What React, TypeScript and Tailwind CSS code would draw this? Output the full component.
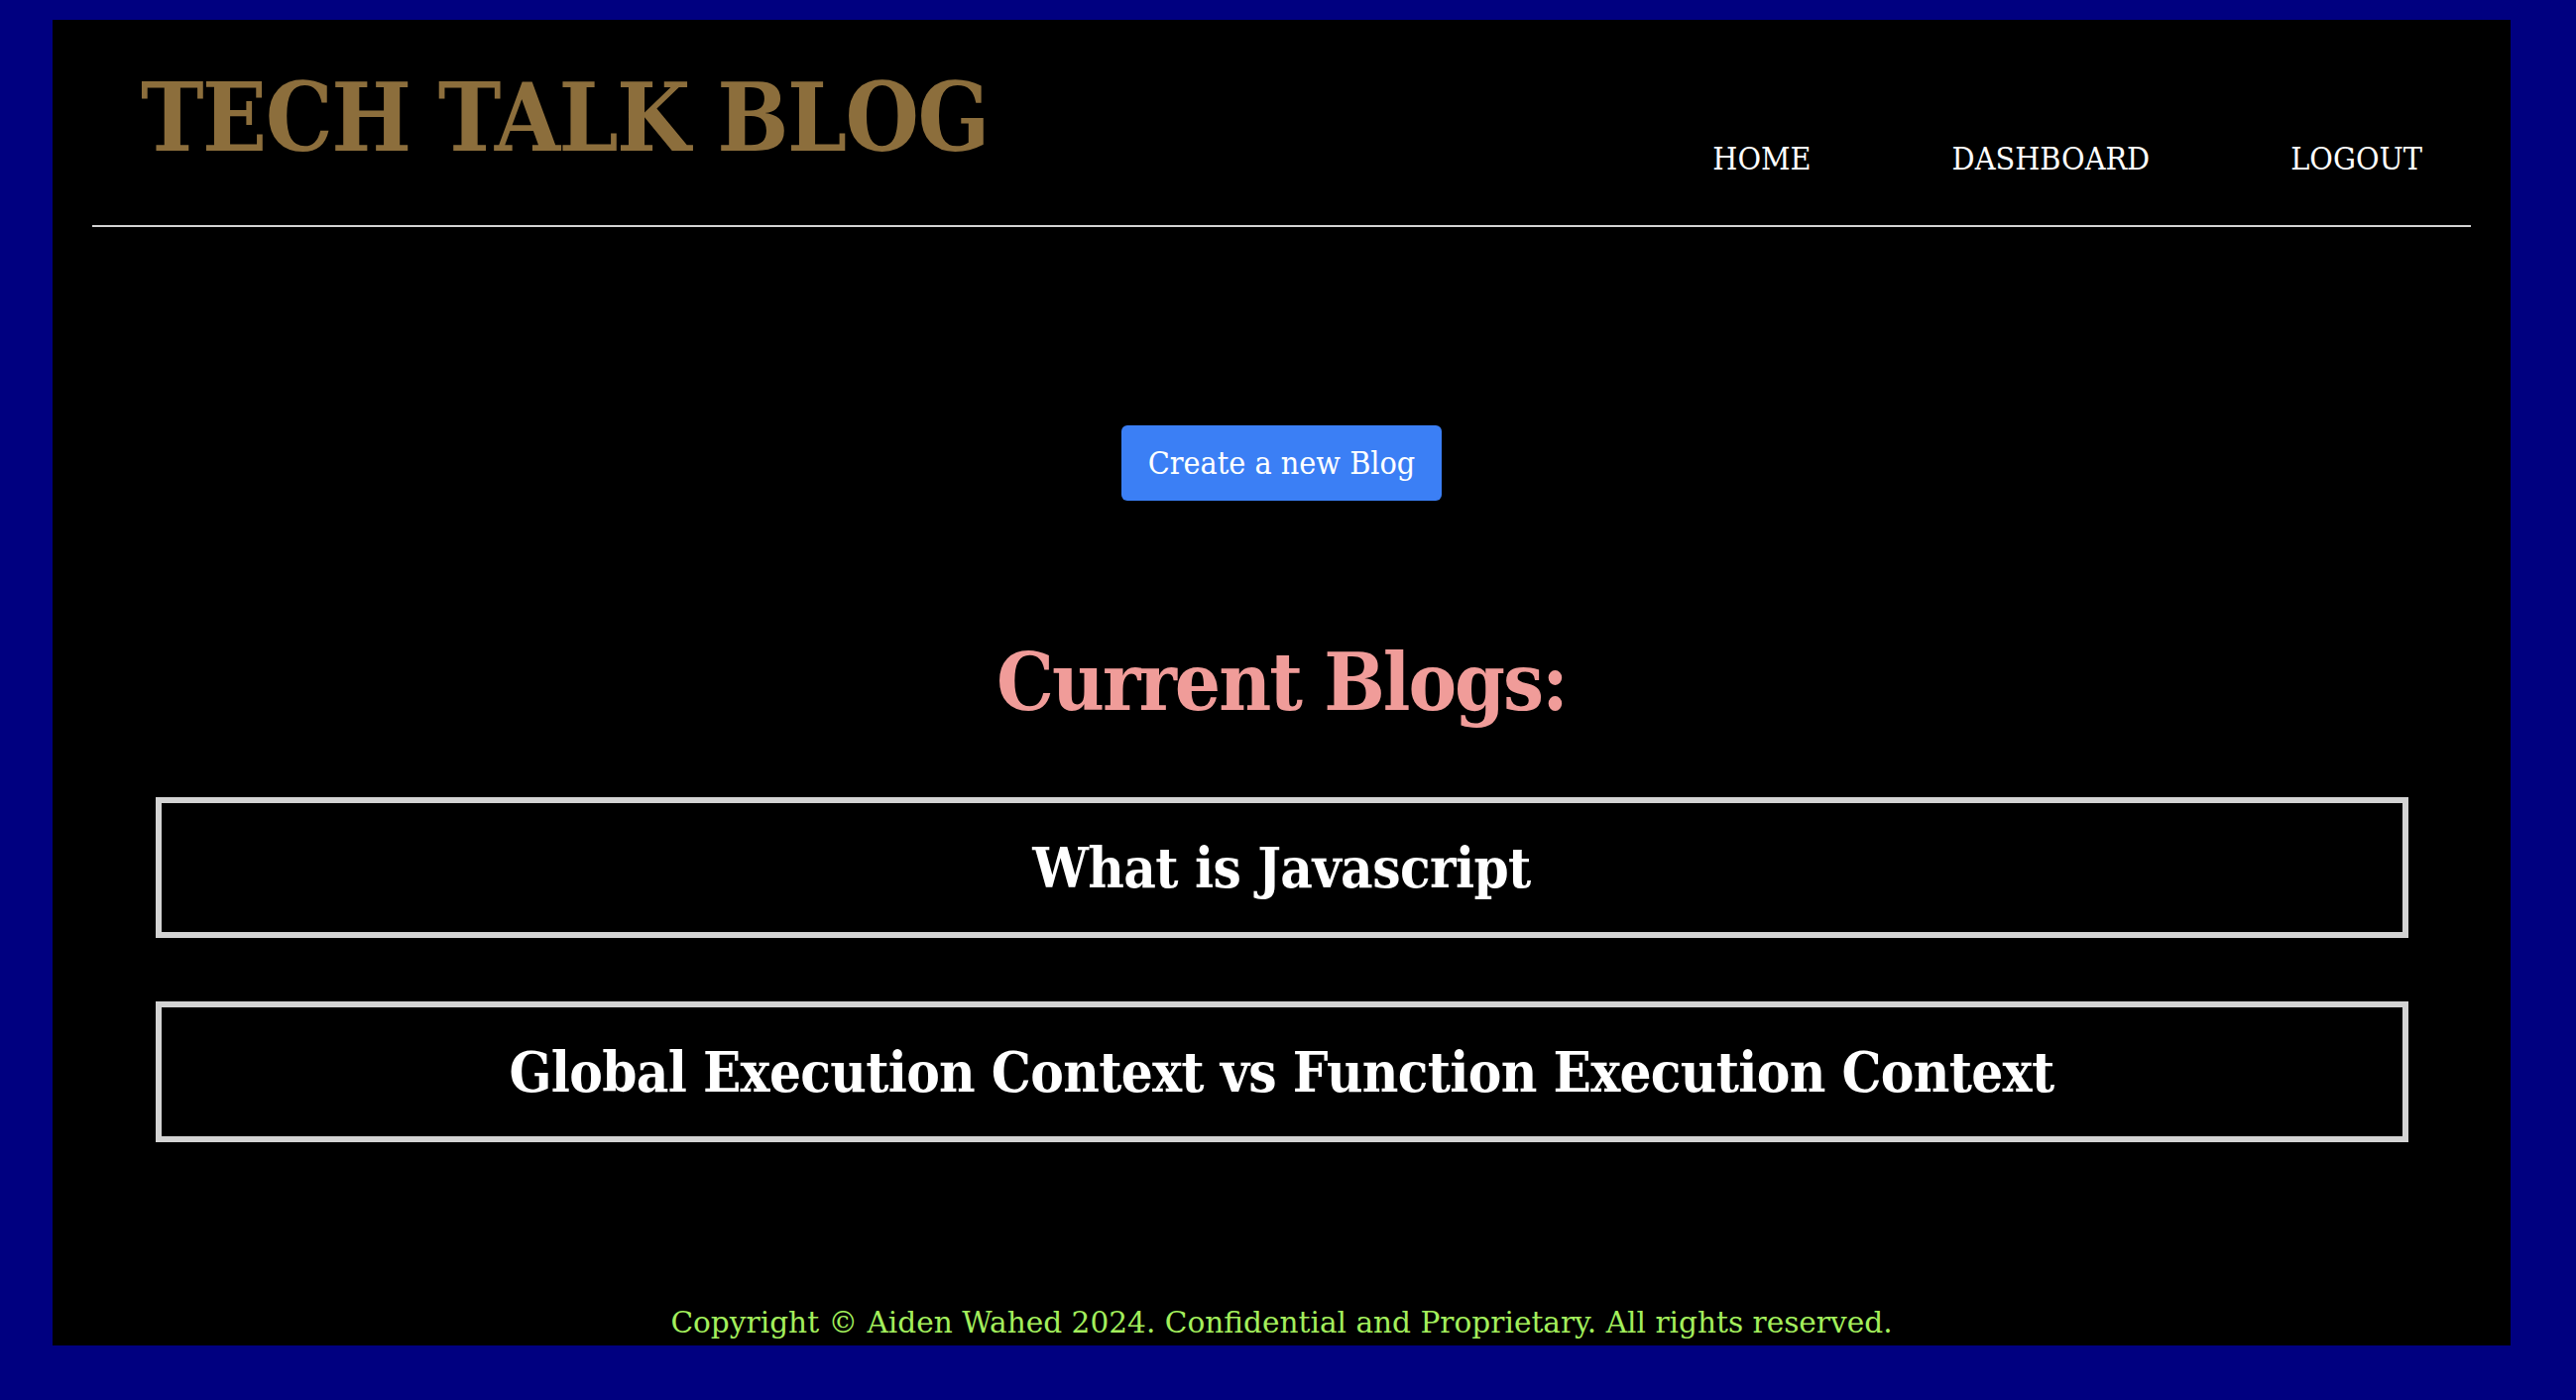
import React from "react";

const serif = { fontFamily: '"DejaVu Serif", "Liberation Serif", serif' };

export default function App() {
  return (
    <div className="min-h-screen bg-[#000080] pt-[20px] pl-[53px]" style={serif}>
      <div className="w-[2479px] h-[1337px] bg-black flex flex-col font-stretch-semi-condensed">
        <header className="mx-[40px] h-[209px] border-b-2 border-[#d3d3d3] flex justify-between items-start px-[49px]">
          <h1 className="pt-[51px] text-[95px] leading-none font-bold tracking-[-1.5px] text-[#8c6e3c]">TECH TALK BLOG</h1>
          <nav className="pt-[124px] flex gap-[142px] text-[32px] leading-none text-white">
            <a href="#">HOME</a>
            <a href="#">DASHBOARD</a>
            <a href="#">LOGOUT</a>
          </nav>
        </header>
        <main className="flex flex-col items-center">
          <button className="mt-[200px] h-[76px] px-[27px] rounded-md bg-[#3b7ff5] text-white text-[32px] leading-none">
            Create a new Blog
          </button>
          <h2 className="mt-[142px] text-[81px] leading-none font-bold tracking-[-2px] text-[#f09c99]">Current Blogs:</h2>
          <div className="mt-[76px] w-[2272px] flex flex-col gap-[64px]">
            <div className="h-[142px] border-[6px] border-[#d3d3d3] flex items-center justify-center">
              <span className="text-[56px] leading-none font-bold tracking-[-0.6px] text-white">What is Javascript</span>
            </div>
            <div className="h-[142px] border-[6px] border-[#d3d3d3] flex items-center justify-center">
              <span className="text-[56px] leading-none font-bold tracking-[-0.7px] text-white">Global Execution Context vs Function Execution Context</span>
            </div>
          </div>
        </main>
        <footer className="mt-auto text-center text-[29.6px] leading-none text-[#a3ef5c] pb-[7px] font-stretch-normal">
          Copyright © Aiden Wahed 2024. Confidential and Proprietary. All rights reserved.
        </footer>
      </div>
    </div>
  );
}
